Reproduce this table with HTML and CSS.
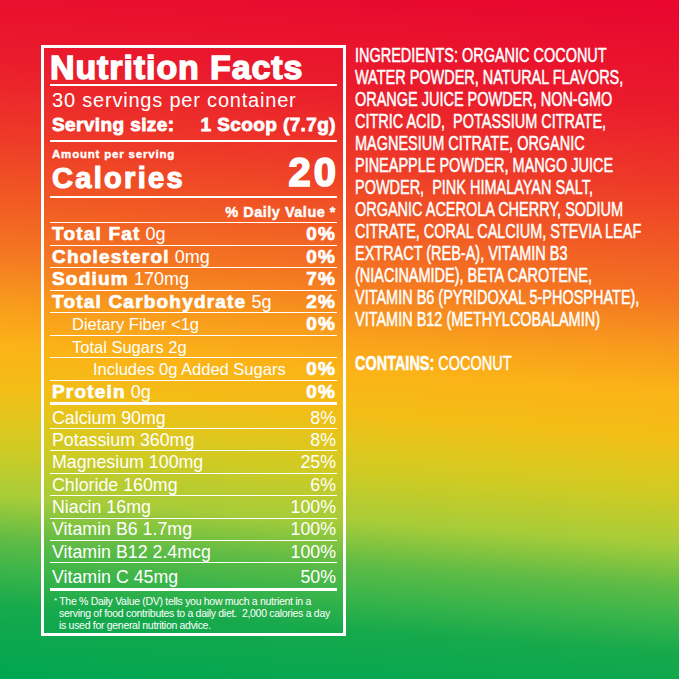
FILE: index.html
```html
<!DOCTYPE html>
<html lang="en">
<head>
<meta charset="utf-8">
<title>Nutrition Facts</title>
<link rel="stylesheet" href="styles.css">
</head>
<body>
<div class="page">
  <section class="label">
    <h1 class="title">Nutrition Facts</h1>
    <div class="servings">30 servings per container</div>
    <div class="size"><span>Serving size:</span><span>1 Scoop (7.7g)</span></div>
    <div class="cal">
      <div class="amount">Amount per serving</div>
      <div class="calories">Calories</div>
      <div class="cal-num">20</div>
    </div>
    <div class="dv-head">% Daily Value *</div>

    <div class="row"><span><b>Total Fat</b> 0g</span><b>0%</b></div>
    <div class="row"><span><b>Cholesterol</b> 0mg</span><b>0%</b></div>
    <div class="row"><span><b>Sodium</b> 170mg</span><b>7%</b></div>
    <div class="row"><span><b>Total Carbohydrate</b> 5g</span><b>2%</b></div>
    <div class="row sub"><span class="ind1">Dietary Fiber &lt;1g</span><b>0%</b></div>
    <div class="row sub"><span class="ind1">Total Sugars 2g</span></div>
    <div class="row sub"><span class="ind2">Includes 0g Added Sugars</span><b>0%</b></div>
    <div class="row"><span><b>Protein</b> 0g</span><b>0%</b></div>

    <div class="row vit first"><span>Calcium 90mg</span><span>8%</span></div>
    <div class="row vit"><span>Potassium 360mg</span><span>8%</span></div>
    <div class="row vit"><span>Magnesium 100mg</span><span>25%</span></div>
    <div class="row vit"><span>Chloride 160mg</span><span>6%</span></div>
    <div class="row vit"><span>Niacin 16mg</span><span>100%</span></div>
    <div class="row vit"><span>Vitamin B6 1.7mg</span><span>100%</span></div>
    <div class="row vit"><span>Vitamin B12 2.4mcg</span><span>100%</span></div>
    <div class="row vit last"><span>Vitamin C 45mg</span><span>50%</span></div>

    <p class="foot"><span class="star">*</span> The % Daily Value (DV) tells you how much a nutrient in a serving of food contributes to a daily diet.&nbsp; 2,000 calories a day is used for general nutrition advice.</p>
  </section>

  <section class="ingredients">
    <p class="ing-text">INGREDIENTS: ORGANIC COCONUT<br>WATER POWDER, NATURAL FLAVORS,<br>ORANGE JUICE POWDER, NON-GMO<br>CITRIC ACID,&nbsp; POTASSIUM CITRATE,<br>MAGNESIUM CITRATE, ORGANIC<br>PINEAPPLE POWDER, MANGO JUICE<br>POWDER,&nbsp; PINK HIMALAYAN SALT,<br>ORGANIC ACEROLA CHERRY, SODIUM<br>CITRATE, CORAL CALCIUM, STEVIA LEAF<br>EXTRACT (REB-A), VITAMIN B3<br>(NIACINAMIDE), BETA CAROTENE,<br>VITAMIN B6 (PYRIDOXAL 5-PHOSPHATE),<br>VITAMIN B12 (METHYLCOBALAMIN)</p>
    <p class="ing-text contains"><b>CONTAINS:</b> COCONUT</p>
  </section>
</div>
</body>
</html>
```

FILE: styles.css
```css
html, body {
  margin: 0;
  padding: 0;
}
body {
  width: 679px;
  height: 679px;
  overflow: hidden;
  color: #fff;
  font-family: "Liberation Sans", Arial, sans-serif;
  background: linear-gradient(184deg,
    #e8052f 0%,
    #ea1c2c 15%,
    #ee3c28 26%,
    #f04f25 31%,
    #f47522 41%,
    #f89a1d 48%,
    #fbb317 54%,
    #f3bd17 60%,
    #e2c61c 64%,
    #d0cb23 68%,
    #a6cc39 75%,
    #5dbb46 81%,
    #3cb54a 85%,
    #16a94c 90%,
    #00a651 100%);
}
.page {
  display: flex;
  align-items: flex-start;
  gap: 9px;
  padding: 45px 0 0 41px;
}

/* ---------- label ---------- */
.label {
  width: 305px;
  flex: none;
  box-sizing: border-box;
  border: 3px solid #fff;
  padding: 0 6px;
}
.title {
  margin: 0;
  padding-top: 2px;
  font-size: 34px;
  line-height: 34px;
  font-weight: 700;
  letter-spacing: 0.9px;
  -webkit-text-stroke: 1.4px #fff;
  border-bottom: 2px solid #fff;
  white-space: nowrap;
}
.servings {
  margin-top: 3px;
  padding-left: 2px;
  font-size: 20px;
  line-height: 22px;
  letter-spacing: 0.8px;
  white-space: nowrap;
}
.size {
  display: flex;
  justify-content: space-between;
  margin-top: 3px;
  padding: 0 1px 4px 2px;
  font-size: 19px;
  line-height: 22px;
  font-weight: 700;
  letter-spacing: 0.4px;
  -webkit-text-stroke: 0.8px #fff;
  border-bottom: 2px solid #fff;
  white-space: nowrap;
}
.cal {
  display: grid;
  grid-template-columns: 1fr auto;
  margin-top: 6px;
  padding: 0 1px 1px 2px;
  border-bottom: 2px solid #fff;
}
.amount {
  grid-column: 1;
  grid-row: 1;
  font-size: 11.5px;
  line-height: 13px;
  font-weight: 700;
  letter-spacing: 0.8px;
  -webkit-text-stroke: 0.4px #fff;
}
.calories {
  grid-column: 1;
  grid-row: 2;
  font-size: 29px;
  line-height: 34px;
  font-weight: 700;
  letter-spacing: 2.3px;
  -webkit-text-stroke: 1.2px #fff;
}
.cal-num {
  grid-column: 2;
  grid-row: 1 / span 2;
  align-self: end;
  margin-right: -3px;
  font-size: 40px;
  line-height: 45px;
  font-weight: 700;
  letter-spacing: 3px;
  -webkit-text-stroke: 1.7px #fff;
}
.dv-head {
  margin-top: 4px;
  padding-right: 1px;
  text-align: right;
  font-size: 14.5px;
  line-height: 20px;
  font-weight: 700;
  letter-spacing: 0.5px;
  -webkit-text-stroke: 0.4px #fff;
}

.row {
  display: flex;
  justify-content: space-between;
  align-items: flex-end;
  box-sizing: border-box;
  height: 22.5px;
  border-top: 1.5px solid #fff;
  padding: 0 1px 1.5px 2px;
  font-size: 18px;
  line-height: 18px;
  white-space: nowrap;
}
.row b {
  font-size: 19px;
  font-weight: 700;
  letter-spacing: 1.2px;
  -webkit-text-stroke: 0.7px #fff;
}
.row.sub {
  font-size: 16.5px;
}
.ind1 { padding-left: 20px; }
.ind2 { padding-left: 41px; }
.row.vit {
  height: 22.4px;
  font-size: 17.8px;
}
.row.vit.first {
  height: 26px;
  border-top-width: 3px;
}
.row.vit.last {
  height: 25.5px;
}
.foot {
  margin: 0;
  border-top: 3px solid #fff;
  padding: 4px 2px 2px 9px;
  text-indent: -5px;
  font-size: 10.5px;
  line-height: 12px;
  letter-spacing: -0.3px;
}
.star {
  font-size: 8px;
  vertical-align: 2px;
}

/* ---------- ingredients ---------- */
.ingredients {
  margin-top: -1px;
  transform: scaleX(0.735);
  transform-origin: left top;
}
.ing-text {
  margin: 0;
  font-size: 19.7px;
  line-height: 22px;
  white-space: nowrap;
  -webkit-text-stroke: 0.5px #fff;
}
.contains {
  margin-top: 22px;
}
.contains b {
  font-weight: 700;
}
```
